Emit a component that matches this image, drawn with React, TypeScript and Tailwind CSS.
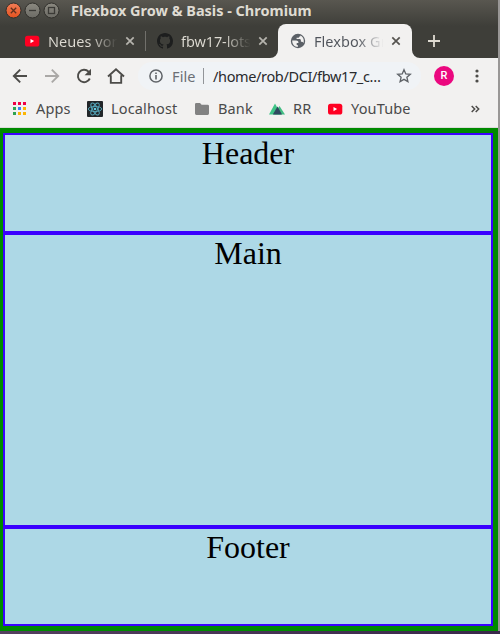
import type { ReactNode } from "react";

function YouTubeIcon() {
  return (
    <svg width="16" height="16" viewBox="0 0 16 16" className="block shrink-0">
      <rect x="1" y="2.7" width="14.3" height="10.8" rx="2.6" fill="#ff0022" />
      <path d="M6.5 6v4.3L10.1 8.1z" fill="#fff" />
    </svg>
  );
}

function GitHubIcon() {
  return (
    <svg width="16" height="16" viewBox="0 0 16 16" className="block shrink-0" fill="#1d1e1e">
      <path d="M8 0C3.58 0 0 3.58 0 8c0 3.54 2.29 6.53 5.47 7.59.4.07.55-.17.55-.38 0-.19-.01-.82-.01-1.49-2.01.37-2.53-.49-2.69-.94-.09-.23-.48-.94-.82-1.13-.28-.15-.68-.52-.01-.53.63-.01 1.08.58 1.23.82.72 1.21 1.87.87 2.33.66.07-.52.28-.87.51-1.07-1.78-.2-3.64-.89-3.64-3.95 0-.87.31-1.59.82-2.15-.08-.2-.36-1.02.08-2.12 0 0 .67-.21 2.2.82.64-.18 1.32-.27 2-.27s1.36.09 2 .27c1.53-1.04 2.2-.82 2.2-.82.44 1.1.16 1.92.08 2.12.51.56.82 1.27.82 2.15 0 3.07-1.87 3.75-3.65 3.95.29.25.54.73.54 1.48 0 1.07-.01 1.93-.01 2.2 0 .21.15.46.55.38A8.01 8.01 0 0 0 16 8c0-4.42-3.58-8-8-8z" />
    </svg>
  );
}

function GlobeIcon() {
  return (
    <svg width="16" height="16" viewBox="0 0 16 16" className="block shrink-0">
      <circle cx="8" cy="8" r="7.2" fill="#5b6066" />
      <path d="M2.2 7.5h4c1.2 0 2.2.7 2.2 1.8v.8H6.7v1.8h1.1v2c-3.2 0-5.6-2.4-5.6-6.4z" fill="#f2f1f0" />
      <path d="M10.2 2.5c2.2.8 3.6 2.8 3.6 5.2 0 .8-.2 1.6-.4 2.2-.4-.7-.9-1.1-1.6-1.1h-.9V7.5c0-.8-.6-1.4-1.4-1.4H6.6V4.8h1.2c.9 0 1.5-.5 1.5-1.4h.9z" fill="#f2f1f0" />
    </svg>
  );
}

function CloseIcon({ color }: { color: string }) {
  return (
    <svg width="10" height="10" viewBox="0 0 10 10" className="block shrink-0">
      <path d="M1.3 1.3l7.4 7.4M8.7 1.3L1.3 8.7" stroke={color} strokeWidth="1.7" />
    </svg>
  );
}

function WindowButton({ close, children }: { close?: boolean; children: ReactNode }) {
  return (
    <svg width="17" height="17" viewBox="0 0 17 17" className="block shrink-0">
      <defs>
        <linearGradient id="closeFill" x1="0" y1="0" x2="0" y2="1">
          <stop offset="0" stopColor="#f37d56" />
          <stop offset="1" stopColor="#e4521f" />
        </linearGradient>
        <linearGradient id="plainFill" x1="0" y1="0" x2="0" y2="1">
          <stop offset="0" stopColor="#8b8980" />
          <stop offset="1" stopColor="#6c6b65" />
        </linearGradient>
      </defs>
      <circle cx="8.5" cy="8.5" r="7.5" fill={close ? "url(#closeFill)" : "url(#plainFill)"} stroke="#302f2b" />
      <g stroke={close ? "#61301d" : "#3b3a36"} fill="none" strokeWidth="1.3">{children}</g>
    </svg>
  );
}

function TitleBar() {
  return (
    <div className="flex h-[21px] items-center pl-[5px]">
      <div className="flex gap-[2px]">
        <WindowButton close><path d="M5.8 5.8l5.4 5.4M11.2 5.8l-5.4 5.4" /></WindowButton>
        <WindowButton><path d="M5 8.5h7" /></WindowButton>
        <WindowButton><rect x="5.5" y="5.5" width="6" height="6" /></WindowButton>
      </div>
      <div className="ml-[11px] whitespace-nowrap text-[14.5px] leading-[21px] font-bold tracking-[-0.01px] text-[#dfdbd2]">
        Flexbox Grow &amp; Basis - Chromium
      </div>
    </div>
  );
}

function TabStrip() {
  return (
    <div className="mt-[3px] flex h-[34px] items-center text-[14.5px] leading-[34px]">
      <div className="flex w-[145px] items-center pl-[24px]">
        <YouTubeIcon />
        <div className="ml-[8px] w-[71px] overflow-hidden whitespace-nowrap bg-linear-to-r from-[#dedbd3] from-60% to-transparent to-98% bg-clip-text tracking-[0.05px] text-transparent">Neues von</div>
        <div className="ml-[6px]"><CloseIcon color="#b6b4ae" /></div>
      </div>
      <div className="h-[20px] w-px bg-[#71706b]" />
      <div className="flex w-[132px] items-center pl-[11px]">
        <GitHubIcon />
        <div className="ml-[8px] w-[71px] overflow-hidden whitespace-nowrap bg-linear-to-r from-[#dedbd3] from-60% to-transparent to-98% bg-clip-text tracking-[-0.1px] text-transparent">fbw17-lots</div>
        <div className="ml-[6px]"><CloseIcon color="#b6b4ae" /></div>
      </div>
      <div className="relative flex h-[34px] w-[134px] items-center rounded-t-[8px] bg-[#f2f1f0] pl-[12px]">
        <svg width="8" height="8" className="absolute bottom-0 -left-[8px]"><path d="M8 0v8H0a8 8 0 0 0 8-8z" fill="#f2f1f0" /></svg>
        <svg width="8" height="8" className="absolute -right-[8px] bottom-0"><path d="M0 0v8h8a8 8 0 0 1-8-8z" fill="#f2f1f0" /></svg>
        <GlobeIcon />
        <div className="ml-[8px] w-[71px] overflow-hidden whitespace-nowrap bg-linear-to-r from-[#50545b] from-60% to-transparent to-98% bg-clip-text tracking-[0.05px] text-transparent">Flexbox Gr</div>
        <div className="ml-[6px]"><CloseIcon color="#55534f" /></div>
      </div>
      <svg width="12" height="12" className="ml-[16px] block"><path d="M6 0v12M0 6h12" stroke="#dfdbd2" strokeWidth="1.8" /></svg>
    </div>
  );
}

function Toolbar() {
  return (
    <div className="flex h-[36px] items-center pl-[12px]">
      <div className="flex gap-[16px]">
        <svg width="16" height="16" fill="none" stroke="#4d4c49" strokeWidth="1.9"><path d="M15 8H2M8.2 1.6L1.8 8l6.4 6.4" /></svg>
        <svg width="16" height="16" fill="none" stroke="#aaa8a6" strokeWidth="1.9"><path d="M1 8h13M7.8 1.6L14.2 8l-6.4 6.4" /></svg>
        <svg width="16" height="16" fill="none" stroke="#4d4c49" strokeWidth="1.9"><path d="M13.8 10.5A6.2 6.2 0 1 1 12.6 3.7L14 5.2" /><path d="M15 .8v6.4H8.6z" fill="#4d4c49" stroke="none" /></svg>
        <svg width="18" height="16" className="-ml-px" fill="none" stroke="#4d4c49" strokeWidth="1.9"><path d="M1 8.5L9 1.3l8 7.2M3.8 7.2v7.7h10.4V7.2" /></svg>
      </div>
      <div className="ml-[13px] flex h-[28px] w-[283px] items-center rounded-full bg-[#f0f3f6] pl-[11px] text-[14.5px] leading-[28px]">
        <svg width="14" height="14" fill="none" stroke="#5f6368"><circle cx="7" cy="7" r="6.1" strokeWidth="1.5" /><path d="M7 6.1v4.3M7 3.4v1.5" strokeWidth="1.6" /></svg>
        <span className="ml-[9px] w-[31px] tracking-[0.1px] text-[#6b6f75]">File</span>
        <span className="h-[16px] w-px bg-[#929599]" />
        <span className="ml-[9px] w-[169px] whitespace-nowrap tracking-[-0.36px] text-[#292a2d]">/home/rob/DCI/fbw17_c…</span>
        <svg width="16" height="16" viewBox="0 0 16 16" className="ml-[14px]"><path d="M8 1.7l1.8 4.2 4.5.4-3.4 3 1 4.4L8 11.4l-3.9 2.3 1-4.4-3.4-3 4.5-.4z" fill="none" stroke="#5f6368" strokeWidth="1.35" /></svg>
      </div>
      <div className="ml-[13px] flex size-[20px] items-center justify-center rounded-full bg-[#eb087f] font-[Roboto,sans-serif] text-[11px] font-medium text-white">R</div>
      <svg width="4" height="14" className="ml-[21px]" fill="#4d4c49"><circle cx="2" cy="2" r="1.6" /><circle cx="2" cy="7" r="1.6" /><circle cx="2" cy="12" r="1.6" /></svg>
    </div>
  );
}

function AppsIcon() {
  return (
    <svg width="14" height="14" className="block">
      <g fill="#f00045"><path d="M0 0h3v3H0zM5 0h3v3H5zM10 0h3v3h-3z" /></g>
      <path d="M0 5h3v3H0zM0 10h3v3H0z" fill="#2fa350" />
      <path d="M5 5h3v3H5z" fill="#3b82f0" />
      <path d="M10 5h3v3h-3zM5 10h3v3H5zM10 10h3v3h-3z" fill="#fbb504" />
    </svg>
  );
}

function ReactIcon() {
  return (
    <svg width="16" height="16" viewBox="0 0 16 16" className="block">
      <rect width="16" height="16" rx="1" fill="#222629" />
      <g fill="none" stroke="#55a9bd" strokeWidth=".9">
        <ellipse cx="8" cy="8" rx="6.7" ry="2.6" />
        <ellipse cx="8" cy="8" rx="6.7" ry="2.6" transform="rotate(60 8 8)" />
        <ellipse cx="8" cy="8" rx="6.7" ry="2.6" transform="rotate(120 8 8)" />
      </g>
      <circle cx="8" cy="8" r="1.3" fill="#65cae0" />
    </svg>
  );
}

function BookmarksBar() {
  return (
    <div className="flex h-[34px] items-center border-b border-[#dddcda] pb-[3px] pl-[13px] text-[14.5px] leading-[28px] whitespace-nowrap text-[#4a4a4a]">
      <AppsIcon />
      <span className="ml-[9px] w-[51px] pb-[2px] tracking-[0.15px]">Apps</span>
      <ReactIcon />
      <span className="ml-[8px] w-[84px] pb-[2px] tracking-[0.15px]">Localhost</span>
      <svg width="14" height="12" className="block" fill="#828282"><path d="M1.3 0H5l1.6 1.7h6a1.4 1.4 0 0 1 1.4 1.4v7.5a1.4 1.4 0 0 1-1.4 1.4H1.4A1.4 1.4 0 0 1 0 10.6V1.3A1.3 1.3 0 0 1 1.3 0z" /></svg>
      <span className="ml-[9px] w-[51px] pb-[2px] tracking-[0.15px]">Bank</span>
      <svg width="16" height="12" className="block"><path d="M0 11.5L6 .5l6 11z" fill="#3fc486" /><path d="M5 11.5L10.5 3 16 11.5z" fill="#42bd83" /><path d="M3.8 11.5L8.5 3.5l4.5 8z" fill="#304960" /></svg>
      <span className="ml-[8px] w-[34px] pb-[2px] tracking-[0.15px]">RR</span>
      <YouTubeIcon />
      <span className="ml-[8px] w-[120px] pb-[2px] tracking-[0.15px]">YouTube</span>
      <svg width="9" height="8" className="block" fill="none" stroke="#4d4c49" strokeWidth="1.5"><path d="M.7 1l3 3-3 3M4.7 1l3 3-3 3" /></svg>
    </div>
  );
}

function WebPage() {
  return (
    <main className="flex h-[503px] w-[498px] flex-col bg-[#008a00] pt-[5px] pr-[5px] pb-[5px] pl-[3px] text-center font-['Liberation_Serif',serif] text-[32px] leading-[37px] text-black">
      <div className="h-[100px] shrink-0 border-2 border-[#3a00ff] bg-[#add8e6]">Header</div>
      <div className="grow border-2 border-[#3a00ff] bg-[#add8e6]">Main</div>
      <div className="h-[99px] shrink-0 border-2 border-[#3a00ff] bg-[#add8e6]">Footer</div>
    </main>
  );
}

export default function App() {
  return (
    <div className="h-[634px] w-[500px] overflow-hidden bg-[#999796] font-['Noto_Sans',sans-serif]">
      <div className="h-[128px] w-[498px] bg-[#f2f1f0]">
        <div className="h-[58px] bg-linear-to-b from-[#595750] to-[#3e3e39] to-45%">
          <TitleBar />
          <TabStrip />
        </div>
        <Toolbar />
        <BookmarksBar />
      </div>
      <WebPage />
      <div className="h-[3px] bg-linear-to-r from-[#54405f] to-[#39284a]" />
    </div>
  );
}
